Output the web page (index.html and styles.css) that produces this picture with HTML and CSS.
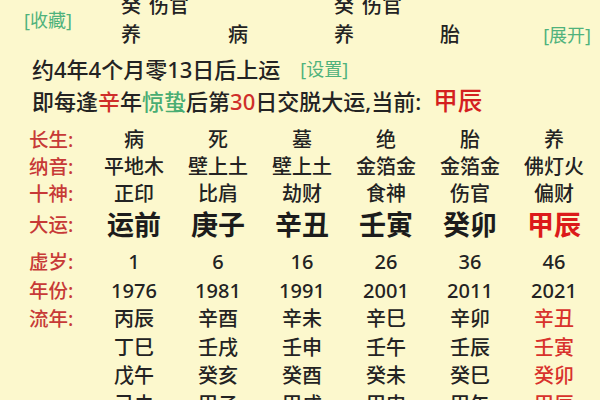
FILE: index.html
```html
<!DOCTYPE html>
<html lang="zh-CN">
<head>
<meta charset="utf-8">
<title>大运</title>
<link rel="stylesheet" href="styles.css">
</head>
<body>
<div class="page">
  <div class="head">
    <div class="fav link">[收藏]</div>
    <div class="pillars">
      <div class="cell"><span class="gan">癸</span>伤官</div>
      <div class="cell"></div>
      <div class="cell"><span class="gan">癸</span>伤官</div>
      <div class="cell"></div>
      <div class="cell">养</div>
      <div class="cell">病</div>
      <div class="cell">养</div>
      <div class="cell">胎</div>
    </div>
    <div class="expand link">[展开]</div>
  </div>

  <div class="info">
    <div class="line">约4年4个月零13日后上运<span class="set link">[设置]</span></div>
    <div class="line">即每逢<span class="red">辛</span>年<span class="green">惊蛰</span>后第<span class="red">30</span>日交脱大运,当前:<span class="cur">甲辰</span></div>
  </div>

  <div class="table">
    <div class="row r27">
      <div class="label">长生:</div>
      <div>病</div><div>死</div><div>墓</div><div>绝</div><div>胎</div><div>养</div>
    </div>
    <div class="row r27">
      <div class="label">纳音:</div>
      <div>平地木</div><div>壁上土</div><div>壁上土</div><div>金箔金</div><div>金箔金</div><div>佛灯火</div>
    </div>
    <div class="row r27">
      <div class="label">十神:</div>
      <div>正印</div><div>比肩</div><div>劫财</div><div>食神</div><div>伤官</div><div>偏财</div>
    </div>
    <div class="row dayun">
      <div class="label">大运:</div>
      <div>运前</div><div>庚子</div><div>辛丑</div><div>壬寅</div><div>癸卯</div><div class="now">甲辰</div>
    </div>
    <div class="row r28">
      <div class="label">虚岁:</div>
      <div>1</div><div>6</div><div>16</div><div>26</div><div>36</div><div>46</div>
    </div>
    <div class="row r28">
      <div class="label">年份:</div>
      <div>1976</div><div>1981</div><div>1991</div><div>2001</div><div>2011</div><div>2021</div>
    </div>
    <div class="row r28">
      <div class="label">流年:</div>
      <div>丙辰</div><div>辛酉</div><div>辛未</div><div>辛巳</div><div>辛卯</div><div class="hot">辛丑</div>
    </div>
    <div class="row r28">
      <div class="label"></div>
      <div>丁巳</div><div>壬戌</div><div>壬申</div><div>壬午</div><div>壬辰</div><div class="hot">壬寅</div>
    </div>
    <div class="row r28">
      <div class="label"></div>
      <div>戊午</div><div>癸亥</div><div>癸酉</div><div>癸未</div><div>癸巳</div><div class="hot">癸卯</div>
    </div>
    <div class="row r28">
      <div class="label"></div>
      <div>己未</div><div>甲子</div><div>甲戌</div><div>甲申</div><div>甲午</div><div class="hot">甲辰</div>
    </div>
  </div>
</div>
</body>
</html>
```

FILE: styles.css
```css
html, body {
  margin: 0;
  padding: 0;
  background: #fcf8cd;
}
body {
  width: 600px;
  height: 400px;
  overflow: hidden;
  font-family: "Noto Sans", "Noto Sans CJK SC", sans-serif;
  font-weight: 500;
  color: #232323;
}
.page {
  width: 600px;
}
.link {
  color: #4fb27c;
  font-size: 18px;
  line-height: 22px;
  font-weight: 400;
  white-space: nowrap;
}
.head {
  display: flex;
  align-items: flex-start;
  height: 54px;
}
.fav {
  box-sizing: border-box;
  width: 121px;
  padding-left: 24px;
  margin-top: 9px;
}
.pillars {
  display: grid;
  grid-template-columns: 107px 106px 106px 60px;
  grid-auto-rows: 29px;
  margin-top: -9px;
  font-size: 20px;
  line-height: 29px;
}
.gan {
  margin-right: 8px;
}
.expand {
  margin-left: auto;
  margin-right: 9px;
  margin-top: 24px;
}
.info {
  padding-left: 32px;
  font-size: 22px;
}
.line {
  height: 31px;
  line-height: 31px;
  white-space: nowrap;
}
.set {
  margin-left: 20px;
  vertical-align: top;
  line-height: 31px;
}
.red {
  color: #cf2f2a;
}
.green {
  color: #49ad73;
}
.cur {
  margin-left: 12px;
  color: #d41f1f;
  font-size: 24.5px;
}
.table {
  margin-top: 10px;
}
.row {
  display: grid;
  grid-template-columns: 92px repeat(6, 84px);
  text-align: center;
  font-size: 20px;
  white-space: nowrap;
}
.row > .label {
  text-align: left;
  padding-left: 29px;
  color: #c73a37;
  font-size: 19.5px;
  font-weight: 500;
}
.r27 {
  height: 27px;
  line-height: 27px;
}
.dayun {
  height: 35px;
  line-height: 35px;
  margin-bottom: 6px;
  font-size: 27px;
  font-weight: bold;
  color: #1c1c1c;
}
.now {
  color: #dc1a1a;
}
.r28 {
  height: 28.5px;
  line-height: 28.5px;
}
.hot {
  color: #d8322c;
}
```
